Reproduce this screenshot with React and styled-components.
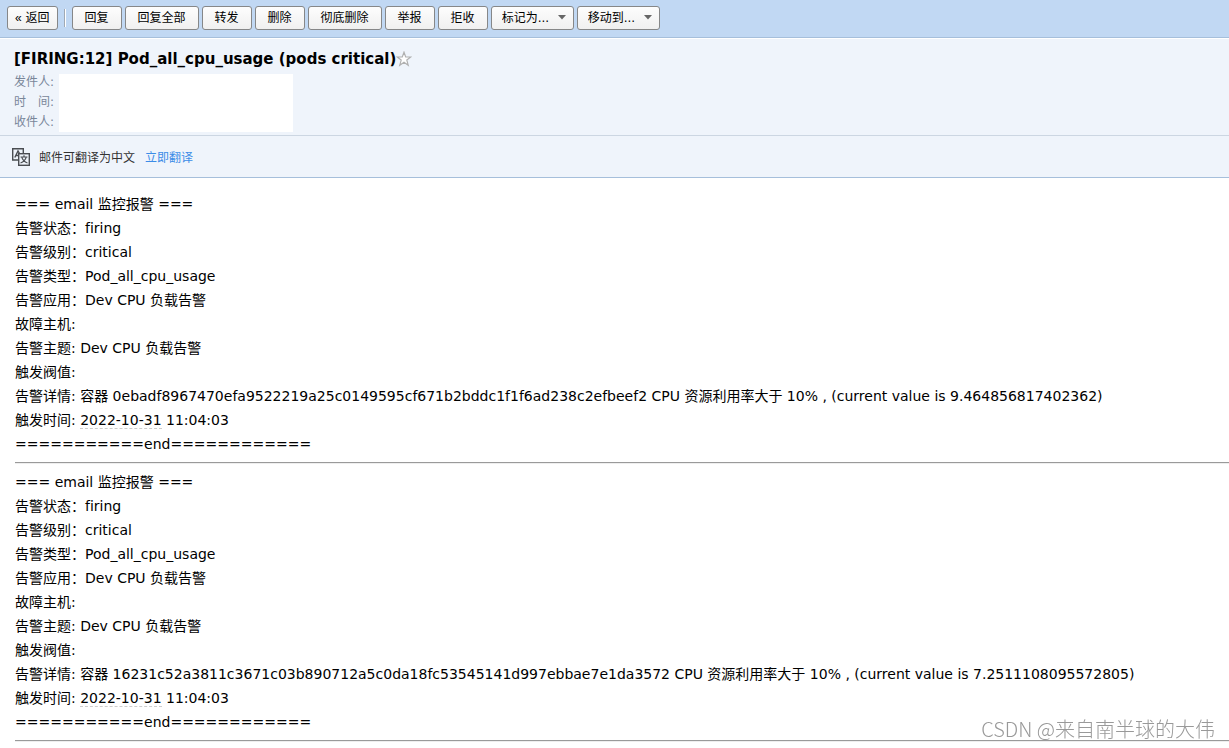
import { useState } from 'react';

import styled, { createGlobalStyle } from 'styled-components';

const GlobalStyle = createGlobalStyle`
  * {
    box-sizing: border-box;
  }
  body {
    margin: 0;
    background: #fff;
    color: #000;
    font-family: "DejaVu Sans", "Noto Sans CJK SC", sans-serif;
    font-size: 12px;
    font-variant-ligatures: none;
  }
`;

const Page = styled.div`
  min-height: 100vh;
`;

const Toolbar = styled.nav`
  display: flex;
  align-items: center;
  gap: 3px;
  height: 38px;
  padding: 0 7px 2px;
  background: #c1d8f3;
  border-bottom: 1px solid #a6bfdb;
`;

const buttonBox = `
  height: 24px;
  border: 1px solid #868788;
  border-radius: 3px;
  background: linear-gradient(#fdfdfd, #f0f0f0);
  color: #000;
  font-family: "DejaVu Sans", "Noto Sans CJK SC", sans-serif;
  font-size: 12px;
  line-height: 20px;
  cursor: pointer;
`;

const Button = styled.button`
  ${buttonBox}
  padding: 0 ${({ $compact }) => ($compact ? 7 : 12)}px;
  white-space: nowrap;
`;

const Back = styled.span`
  font-family: "Liberation Sans", sans-serif;
`;

const Separator = styled.span`
  width: 2px;
  height: 18px;
  margin: 0 3px;
  border-left: 1px solid #a0a9b4;
  border-right: 1px solid #fff;
`;

const SelectBox = styled.span`
  display: inline-grid;
  align-items: center;
  width: 83px;

  select, svg {
    grid-area: 1 / 1;
  }
  svg {
    justify-self: end;
    margin-right: 8px;
    pointer-events: none;
  }
`;

const Select = styled.select`
  ${buttonBox}
  width: 100%;
  padding: 0 10px;
  appearance: none;
`;

const Header = styled.header`
  padding: 10px 14px 3px;
  background: #eff4fb;
  border-top: 1px solid #fff;
  border-bottom: 1px solid #ccd6e2;
`;

const TitleRow = styled.div`
  display: flex;
  align-items: center;
  height: 20px;
  margin-bottom: 3px;
`;

const Title = styled.h1`
  margin: 0;
  font-family: "DejaVu Sans", sans-serif;
  font-size: 15px;
  font-weight: 700;
  line-height: 20px;
`;

const StarButton = styled.button`
  display: flex;
  padding: 0;
  border: none;
  background: none;
  cursor: pointer;
`;

const Meta = styled.div`
  display: flex;
  align-items: flex-end;
  gap: 5px;
`;

const Labels = styled.div`
  color: #798699;
  line-height: 20px;
  white-space: pre;
`;

const Blank = styled.div`
  width: 234px;
  height: 58px;
  background: #fff;
`;

const TranslateBar = styled.section`
  display: flex;
  align-items: center;
  height: 42px;
  padding: 0 12px;
  background: #eff4fb;
  border-bottom: 1px solid #a6bfdb;
  color: #333;

  svg {
    margin-right: 9px;
  }
`;

const TranslateLink = styled.a`
  margin-left: 10px;
  color: #3c8ce7;
  text-decoration: none;
`;

const Content = styled.main`
  padding: 14px 0 0 15px;
  font-size: 14px;
  line-height: 24px;
`;

const Line = styled.div`
  height: 24px;
  white-space: pre;
`;

const DateText = styled.span`
  border-bottom: 1px dashed #ccc;
`;

const Rule = styled.hr`
  height: 2px;
  margin: 6px 0;
  border: none;
  border-top: 1px solid #9a9a9a;
  border-bottom: 1px solid #eee;
`;

const Watermark = styled.div`
  position: fixed;
  right: 14px;
  bottom: 4px;
  color: #999;
  font-family: "Noto Sans CJK SC", sans-serif;
  font-size: 20px;
  font-weight: 300;
  line-height: 30px;
`;

const actions = ['回复', '回复全部', '转发', '删除', '彻底删除', '举报', '拒收'];

const alerts = [
  {
    container: '0ebadf8967470efa9522219a25c0149595cf671b2bddc1f1f6ad238c2efbeef2',
    value: '9.464856817402362',
  },
  {
    container: '16231c52a3811c3671c03b890712a5c0da18fc53545141d997ebbae7e1da3572',
    value: '7.2511108095572805',
  },
];

function ToolbarSelect({ label }) {
  return (
    <SelectBox>
      <Select aria-label={label}>
        <option>{label}</option>
      </Select>
      <svg width="8" height="5" viewBox="0 0 8 5" aria-hidden="true">
        <path d="M0 0H8L4 4.5Z" fill="#666" />
      </svg>
    </SelectBox>
  );
}

function Star() {
  const [starred, setStarred] = useState(false);

  return (
    <StarButton type="button" aria-label="星标" onClick={() => setStarred(!starred)}>
      <svg width="16" height="16" viewBox="0 0 16 16">
        <path
          d="M8 1.2L9.7 6H14.8L10.8 9.1L12.2 14.2L8 11.2L3.8 14.2L5.2 9.1L1.2 6H6.3Z"
          fill={starred ? '#fc3' : '#fff'}
          stroke="#b0b0b0"
          strokeWidth="1.2"
        />
      </svg>
    </StarButton>
  );
}

function TranslateIcon() {
  return (
    <svg width="18" height="18" viewBox="0 0 18 18" fill="none" stroke="#4a4d52" strokeWidth="1.4" aria-hidden="true">
      <path d="M6 12H0.7V0.7H11.3V5" />
      <path d="M2.8 9.5L6 3L7.4 5.4M4 7.5H6" />
      <rect x="6.7" y="5.7" width="10.6" height="11.6" />
      <path d="M8.5 9H15.5M12 7.2V9M9.8 9.2C10.5 12 12.5 14 15.5 15M14.2 9.2C13.5 12 11.5 14 8.5 15" strokeWidth="1.2" />
    </svg>
  );
}

function Alert({ container, value }) {
  return (
    <article>
      <Line>=== email 监控报警 ===</Line>
      <Line>告警状态：firing</Line>
      <Line>告警级别：critical</Line>
      <Line>告警类型：Pod_all_cpu_usage</Line>
      <Line>告警应用：Dev CPU 负载告警</Line>
      <Line>故障主机:</Line>
      <Line>告警主题: Dev CPU 负载告警</Line>
      <Line>触发阀值:</Line>
      <Line>{`告警详情: 容器 ${container} CPU 资源利用率大于 10% , (current value is ${value})`}</Line>
      <Line>
        {'触发时间: '}
        <DateText>2022-10-31</DateText>
        {' 11:04:03'}
      </Line>
      <Line>===========end============</Line>
      <Rule />
    </article>
  );
}

export default function App() {
  return (
    <Page>
      <GlobalStyle />
      <Toolbar>
        <Button type="button" $compact>
          <Back>«</Back>
          {' 返回'}
        </Button>
        <Separator />
        {actions.map((action) => (
          <Button key={action} type="button">{action}</Button>
        ))}
        <ToolbarSelect label="标记为..." />
        <ToolbarSelect label="移动到..." />
      </Toolbar>
      <Header>
        <TitleRow>
          <Title>[FIRING:12] Pod_all_cpu_usage (pods critical)</Title>
          <Star />
        </TitleRow>
        <Meta>
          <Labels>
            <div>发件人:</div>
            <div>时　间:</div>
            <div>收件人:</div>
          </Labels>
          <Blank />
        </Meta>
      </Header>
      <TranslateBar>
        <TranslateIcon />
        <span>邮件可翻译为中文</span>
        <TranslateLink href="#translate">立即翻译</TranslateLink>
      </TranslateBar>
      <Content>
        {alerts.map((alert) => (
          <Alert key={alert.container} container={alert.container} value={alert.value} />
        ))}
      </Content>
      <Watermark>CSDN @来自南半球的大伟</Watermark>
    </Page>
  );
}
